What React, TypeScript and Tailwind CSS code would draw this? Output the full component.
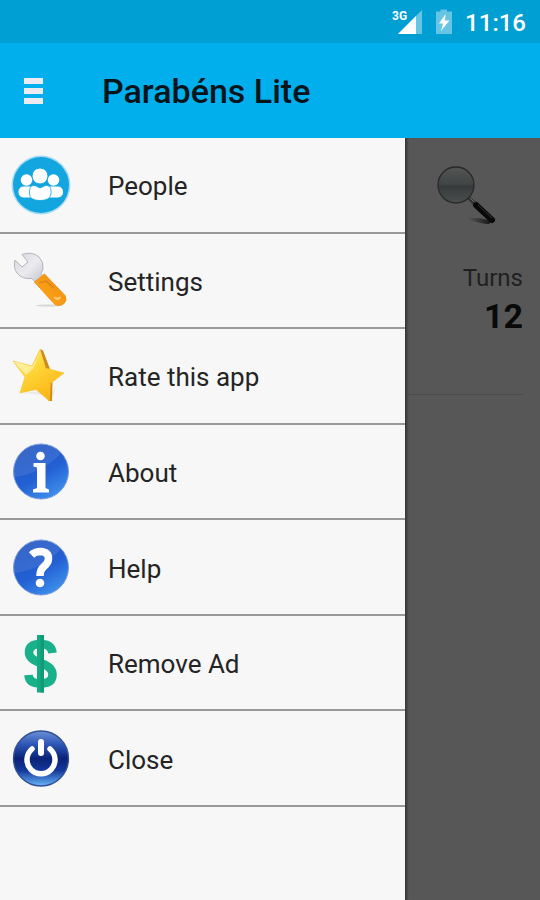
import type { ReactNode } from "react";

function PeopleIcon() {
  return (
    <svg viewBox="0 0 80 80" className="size-20" aria-hidden="true">
      <circle cx="41" cy="40" r="29.500" fill="#a5dcf3" />
      <circle cx="41" cy="40" r="28" fill="#13a5e0" />
      <g fill="#fff">
        <circle cx="26.500" cy="35" r="5.800" />
        <circle cx="53.500" cy="35" r="5.800" />
        <rect x="18.500" y="41.500" width="18" height="11" rx="5" />
        <rect x="44.500" y="41.500" width="18.500" height="11" rx="5" />
      </g>
      <path d="M35 40.500L40 43L45.500 40.500Q51 40 51 46V49Q50 55.500 40 55.500T29.500 49V46Q29.500 40 35 40.500Z" fill="#fff" stroke="#13a5e0" strokeWidth=".8" />
      <circle cx="40" cy="31" r="8" fill="#fff" stroke="#13a5e0" strokeWidth="1" />
    </svg>
  );
}

function WrenchIcon() {
  return (
    <svg viewBox="0 0 80 80" className="size-20" aria-hidden="true">
      <defs>
        <linearGradient id="steel" x1="0" y1="0" x2="1" y2="1">
          <stop offset="0" stopColor="#d5d5da" />
          <stop offset=".5" stopColor="#ececf0" />
          <stop offset="1" stopColor="#bfc0c9" />
        </linearGradient>
        <linearGradient id="grip" x1="0" y1="1" x2="1" y2="0">
          <stop offset="0" stopColor="#fbaa28" />
          <stop offset=".5" stopColor="#f99a13" />
          <stop offset="1" stopColor="#ea8c10" />
        </linearGradient>
      </defs>
      <ellipse cx="49" cy="65.500" rx="13" ry="1" fill="#d6d6d6" />
      <path d="M22 14.500Q32 11 39 17Q44 22 43 29L41 33.500L44 37L36 43L32 38.500Q22 39.500 17 33Q13 28 15 20L22 27L28 22Z" fill="url(#steel)" stroke="#b3b5bf" strokeWidth="1" strokeLinejoin="round" />
      <path d="M34.500 42L44.500 34L65 55.500Q67.500 60 64 63.500Q59 67 54.500 64Z" fill="url(#grip)" stroke="#f0941a" strokeWidth="1" strokeLinejoin="round" />
      <path d="M39 43L46 41L54 48" fill="none" stroke="#d08420" strokeWidth="1.200" />
      <path d="M54 57.500L58 59L60.500 57" fill="none" stroke="#ffc977" strokeWidth="2" />
    </svg>
  );
}

function StarIcon() {
  return (
    <svg viewBox="0 0 80 80" className="size-20" aria-hidden="true">
      <defs>
        <linearGradient id="star" x1="0" y1="0" x2="0.600" y2="1">
          <stop offset="0" stopColor="#fff2a0" />
          <stop offset=".4" stopColor="#ffda3d" />
          <stop offset="1" stopColor="#fbb414" />
        </linearGradient>
      </defs>
      <path d="M22 57L40 55L50 60L56 50L53 60Z" fill="#e9e9e9" />
      <path d="M40 13L43 14.500L50 33L46 34ZM49 47L52.500 46L52 65L48.500 65Z" fill="#cf8a17" />
      <path d="M40 13.500L45.500 32L64 37L50.500 47.500L49.500 65L36 53.500L20 57L25 41L13 25L32 30Z" fill="url(#star)" stroke="#f4c129" strokeWidth=".6" strokeLinejoin="round" />
      <path d="M14 25.500L32 30.500L39 19L33 33L26 39Z" fill="#fff8c8" opacity=".6" />
    </svg>
  );
}

function BlueDisc({ children }: { children: ReactNode }) {
  return (
    <svg viewBox="0 0 80 80" className="size-20" aria-hidden="true">
      <defs>
        <linearGradient id="disc" x1=".2" y1="0" x2=".8" y2="1">
          <stop offset="0" stopColor="#2456bf" />
          <stop offset=".55" stopColor="#2360d4" />
          <stop offset="1" stopColor="#4297ee" />
        </linearGradient>
      </defs>
      <circle cx="41" cy="40.500" r="27.500" fill="url(#disc)" stroke="#7c9ddb" strokeWidth="1" />
      <path d="M14.500 46Q43 42 61 22A27 27 0 0 0 14.500 46Z" fill="#fff" opacity=".09" />
      {children}
    </svg>
  );
}

function InfoIcon() {
  return (
    <BlueDisc>
      <circle cx="40.500" cy="25" r="4.300" fill="#fff" />
      <path d="M33.500 32H45.500V57L49 58.500V61.500H33V58.500L37 57V36.500L33.500 35.500Z" fill="#fff" />
    </BlueDisc>
  );
}

function HelpIcon() {
  return (
    <BlueDisc>
      <path d="M31.500 28Q35 24.500 40.500 24.500Q48.500 25 48.500 31.500Q48.500 36 44 39.500Q40 42.500 40 49" fill="none" stroke="#fff" strokeWidth="7.500" />
      <circle cx="40" cy="56" r="4.300" fill="#fff" />
    </BlueDisc>
  );
}

function DollarIcon() {
  return (
    <svg viewBox="0 0 80 80" className="size-20" aria-hidden="true">
      <path d="M52.500 30Q51.500 21 40.500 21Q29 21 29 29.500Q29 36 40.500 40Q52.500 44 52.500 51.500Q52.500 60.500 40.500 60.500Q29 60.500 28.500 52" fill="none" stroke="#19b18a" strokeWidth="8.500" />
      <path d="M37 12H44V69.500H37Z" fill="#14aa84" />
      <path d="M40.500 12H44V69.500H40.500Z" fill="#109a78" />
    </svg>
  );
}

function PowerIcon() {
  return (
    <svg viewBox="0 0 80 80" className="size-20" aria-hidden="true">
      <defs>
        <linearGradient id="power" x1="0" y1="0" x2="0" y2="1">
          <stop offset="0" stopColor="#6d90da" />
          <stop offset=".25" stopColor="#2c55b4" />
          <stop offset=".5" stopColor="#0b2278" />
          <stop offset=".72" stopColor="#143899" />
          <stop offset="1" stopColor="#68b5fb" />
        </linearGradient>
      </defs>
      <circle cx="41" cy="40.500" r="27.500" fill="url(#power)" stroke="#345094" strokeWidth="1.300" />
      <path d="M32 31A14 14 0 1 0 50 31" fill="none" stroke="#fff" strokeWidth="5.500" strokeLinecap="round" />
      <path d="M41 24V35" stroke="#fff" strokeWidth="6" strokeLinecap="round" />
    </svg>
  );
}

function MagnifierIcon() {
  return (
    <svg viewBox="0 0 64 64" className="size-16" aria-hidden="true">
      <defs>
        <linearGradient id="lens" x1="0" y1="0" x2="0" y2="1">
          <stop offset="0" stopColor="#535555" />
          <stop offset=".48" stopColor="#424545" />
          <stop offset=".52" stopColor="#373a3a" />
          <stop offset="1" stopColor="#4b4e4e" />
        </linearGradient>
        <linearGradient id="cast" x1="0" y1="0" x2="1" y2="0">
          <stop offset="0" stopColor="#222" stopOpacity="0" />
          <stop offset="1" stopColor="#111" />
        </linearGradient>
      </defs>
      <path d="M31 54Q44 53 57 57L54 60Q44 60 31 54Z" fill="url(#cast)" />
      <path d="M34 34L41 41" stroke="#303030" strokeWidth="3.500" />
      <path d="M35 34L41 40" stroke="#6a6a6a" strokeWidth="1" />
      <circle cx="21" cy="21" r="18" fill="url(#lens)" stroke="#292929" strokeWidth="1.300" />
      <path d="M41 41L57 56" stroke="#090909" strokeWidth="6" strokeLinecap="round" />
      <path d="M43 41L57 54" stroke="#303030" strokeWidth="1" />
    </svg>
  );
}

const menu = [
  { label: "People", icon: <PeopleIcon /> },
  { label: "Settings", icon: <WrenchIcon /> },
  { label: "Rate this app", icon: <StarIcon /> },
  { label: "About", icon: <InfoIcon /> },
  { label: "Help", icon: <HelpIcon /> },
  { label: "Remove Ad", icon: <DollarIcon /> },
  { label: "Close", icon: <PowerIcon /> },
];

function StatusBar() {
  return (
    <div className="flex h-[43px] items-center justify-end bg-[#009fd3] pr-3.5 text-white">
      <svg viewBox="0 0 32 28" className="mr-3 h-7 w-8" aria-label="3G signal">
        <path d="M31 2V26H7Z" fill="#66c5e5" />
        <path d="M25 8V26H7Z" fill="#fff" />
        <text x="1" y="12" fill="#fff" fontFamily="Roboto, sans-serif" fontWeight="700" fontSize="12">3G</text>
      </svg>
      <svg viewBox="0 0 18 28" className="mr-3 h-7 w-[18px]" aria-label="Battery charging">
        <path d="M5.500 1.500H12V3.500H17V26H1V3.500H5.500Z" fill="#66c5e5" />
        <path d="M10.500 6L4 15.500H8L6 23L14.500 12.500H10Z" fill="#fff" />
      </svg>
      <time className="pt-0.5 text-2xl leading-8 font-medium">11:16</time>
    </div>
  );
}

export default function App() {
  return (
    <div className="flex min-h-screen flex-col bg-[#575757] font-[Roboto,'Noto_Sans',sans-serif]">
      <StatusBar />
      <header className="flex h-[95px] items-center bg-[#01afec] pl-6">
        <button type="button" aria-label="Menu" className="flex w-[19px] flex-col gap-1">
          <span className="h-1.5 bg-[#ebecf3]" />
          <span className="h-1.5 bg-[#ebecf3]" />
          <span className="h-1.5 bg-[#ebecf3]" />
        </button>
        <h1 className="ml-[59px] text-[34px] leading-10 font-medium text-[#03141b]">Parabéns Lite</h1>
      </header>
      <div className="flex flex-1">
        <nav className="w-3/4 bg-[#f7f7f7]">
          <ul className="grid h-[669px] grid-rows-7">
            {menu.map((item) => (
              <li key={item.label} className="border-b-2 border-[#999999]">
                <button type="button" className="flex h-full w-full items-center text-left">
                  {item.icon}
                  <span className="ml-7 pt-[3px] text-[26px] leading-8 text-[#242424]">{item.label}</span>
                </button>
              </li>
            ))}
          </ul>
        </nav>
        <div className="w-1 bg-linear-to-r from-[#353535] to-[#575757]" />
        <main className="flex-1 pr-[17px]">
          <section className="h-[257px] border-b border-[#4c4c4c] pt-[26px]">
            <button type="button" aria-label="Search" className="ml-[26px] block">
              <MagnifierIcon />
            </button>
            <p className="mt-8 text-right text-2xl leading-9 text-[#202020]">Turns</p>
            <p className="text-right text-[34px] leading-10 font-bold text-[#090909]">12</p>
          </section>
        </main>
      </div>
    </div>
  );
}
